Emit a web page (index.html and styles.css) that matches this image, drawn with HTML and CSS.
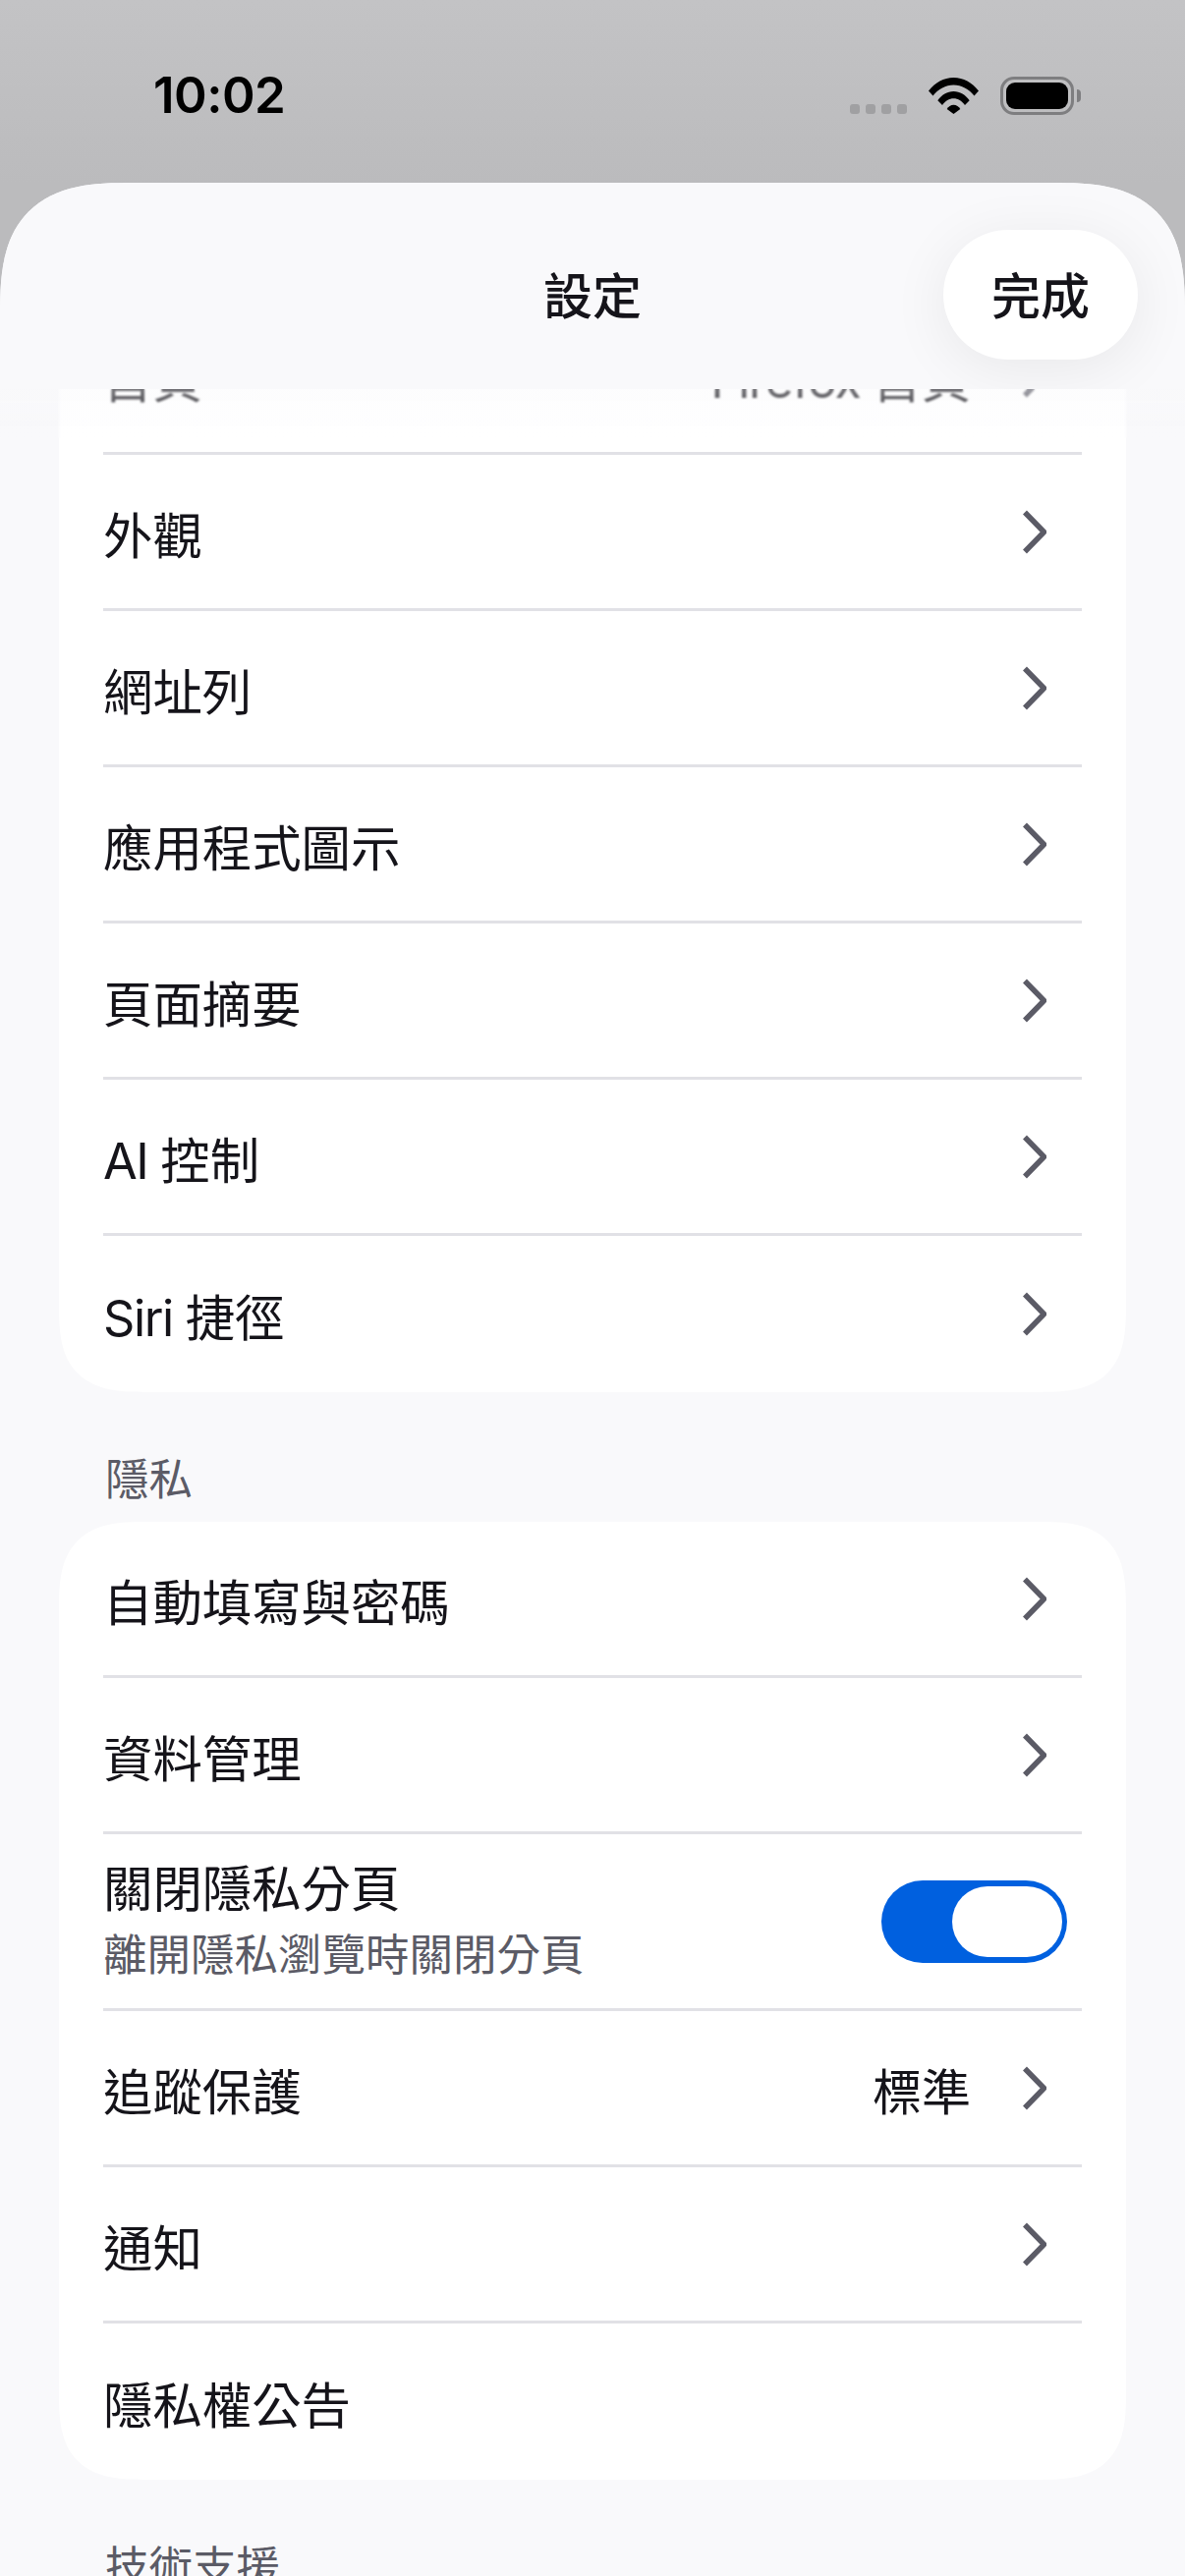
FILE: index.html
```html
<!DOCTYPE html>
<html lang="zh-Hant">
<head>
<meta charset="utf-8">
<title>設定</title>
<link rel="stylesheet" href="styles.css">
</head>
<body>
<div class="screen">
  <div class="status">
    <span class="time">10:02</span>
    <div class="status-icons">
      <div class="signal"><i></i><i></i><i></i><i></i></div>
      <svg class="wifi" viewBox="0 0 51 37"><path d="M0 13.5C6.800 5 15.500 0 25.500 0S44.200 5 51 13.500L46.500 18.500C40.800 11.500 33.800 7.500 25.500 7.500S10.200 11.500 4.500 18.500Z"/><path d="M9.300 23.300C13.300 17.500 19 14 25.500 14S37.700 17.500 41.700 23.300L37 28C34 23.800 30 21.300 25.500 21.300S17 23.800 14 28Z"/><path d="M18.700 32C20.200 29.500 22.600 27.800 25.500 27.800S30.800 29.500 32.300 32L25.500 37Z"/></svg>
      <div class="battery"><div class="battery-body"><div class="battery-fill"></div></div><div class="battery-nub"></div></div>
    </div>
  </div>
  <main class="sheet">
    <header class="nav">
      <span></span>
      <h1 class="nav-title">設定</h1>
      <button class="done">完成</button>
    </header>
    <div class="nav-fade"></div>
    <div class="scroll">
      <section class="card">
        <div class="row"><span class="label">首頁</span><span class="value"><span class="latin">Firefox </span>首頁</span><svg class="chev" viewBox="0 0 25 45"><path d="M3 2.500L22.500 22.500L3 42.500"/></svg></div>
        <div class="row"><span class="label">外觀</span><svg class="chev" viewBox="0 0 25 45"><path d="M3 2.500L22.500 22.500L3 42.500"/></svg></div>
        <div class="row"><span class="label">網址列</span><svg class="chev" viewBox="0 0 25 45"><path d="M3 2.500L22.500 22.500L3 42.500"/></svg></div>
        <div class="row"><span class="label">應用程式圖示</span><svg class="chev" viewBox="0 0 25 45"><path d="M3 2.500L22.500 22.500L3 42.500"/></svg></div>
        <div class="row"><span class="label">頁面摘要</span><svg class="chev" viewBox="0 0 25 45"><path d="M3 2.500L22.500 22.500L3 42.500"/></svg></div>
        <div class="row"><span class="label"><span class="latin">AI </span>控制</span><svg class="chev" viewBox="0 0 25 45"><path d="M3 2.500L22.500 22.500L3 42.500"/></svg></div>
        <div class="row"><span class="label"><span class="latin">Siri </span>捷徑</span><svg class="chev" viewBox="0 0 25 45"><path d="M3 2.500L22.500 22.500L3 42.500"/></svg></div>
      </section>
      <h2 class="section-title">隱私</h2>
      <section class="card">
        <div class="row"><span class="label">自動填寫與密碼</span><svg class="chev" viewBox="0 0 25 45"><path d="M3 2.500L22.500 22.500L3 42.500"/></svg></div>
        <div class="row"><span class="label">資料管理</span><svg class="chev" viewBox="0 0 25 45"><path d="M3 2.500L22.500 22.500L3 42.500"/></svg></div>
        <div class="row row-tall">
          <div class="stack"><span class="label">關閉隱私分頁</span><span class="sub">離開隱私瀏覽時關閉分頁</span></div>
          <div class="toggle"><div class="knob"></div></div>
        </div>
        <div class="row"><span class="label">追蹤保護</span><span class="value">標準</span><svg class="chev" viewBox="0 0 25 45"><path d="M3 2.500L22.500 22.500L3 42.500"/></svg></div>
        <div class="row"><span class="label">通知</span><svg class="chev" viewBox="0 0 25 45"><path d="M3 2.500L22.500 22.500L3 42.500"/></svg></div>
        <div class="row"><span class="label">隱私權公告</span></div>
      </section>
      <h2 class="section-title">技術支援</h2>
    </div>
  </main>
</div>
</body>
</html>
```

FILE: styles.css
```css
* { box-sizing: border-box; }
html, body { margin: 0; padding: 0; height: 2622px; overflow: hidden; }
body {
  font-family: Inter, "Noto Sans CJK TC", sans-serif;
  color: #15141a;
}
.screen {
  width: 1206px;
  height: 2622px;
  display: flex;
  flex-direction: column;
  overflow: hidden;
  background: linear-gradient(#c3c3c5, #bbbbbd 186px, #bbbbbd 400px);
}
.status {
  height: 186px;
  flex: none;
  display: flex;
  justify-content: space-between;
  align-items: flex-start;
  padding: 66px 106px 0 156px;
}
.time { font-size: 51px; line-height: 62px; font-weight: 600; color: #000; letter-spacing: -0.5px; }
.status-icons { display: flex; align-items: flex-start; margin-top: 12px; }
.signal { display: flex; gap: 6px; margin-top: 28px; }
.signal i { display: block; width: 10px; height: 10px; border-radius: 3px; background: #a0a0a2; }
.wifi { width: 51px; height: 37px; margin: 1px 0 0 22px; fill: #000; }
.battery { display: flex; align-items: center; margin-left: 22px; }
.battery-body { width: 75px; height: 39px; padding: 3px; border: 3px solid #7e7e80; border-radius: 14px; }
.battery-fill { width: 100%; height: 100%; background: #000; border-radius: 9px; }
.battery-nub { width: 4px; height: 13px; margin-left: 3px; background: #7e7e80; border-radius: 0 4px 4px 0; }

.sheet {
  position: relative;
  flex: 1;
  overflow: hidden;
  background: #f9f9fb;
  border-radius: 135px 135px 0 0;
  corner-shape: superellipse(1.5);
}
.nav {
  position: absolute;
  top: 0;
  left: 0;
  right: 0;
  height: 210px;
  z-index: 2;
  padding: 48px 48px 30px;
  display: grid;
  grid-template-columns: 1fr auto 1fr;
  align-items: center;
  overflow: hidden;
  background: #f9f9fb;
}
.nav-title { margin: 0; padding-top: 3px; font-size: 50px; line-height: 60px; font-weight: 500; }
.done {
  justify-self: end;
  width: 198px;
  height: 132px;
  padding: 3px 0 0;
  border: 0;
  border-radius: 66px;
  background: #fff;
  font: 500 50px/60px Inter, "Noto Sans CJK TC", sans-serif;
  color: #15141a;
  box-shadow: 0 10px 60px rgba(0, 0, 0, 0.07);
}
.nav-fade {
  position: absolute;
  top: 210px;
  left: 0;
  right: 0;
  height: 50px;
  z-index: 1;
  background: linear-gradient(rgba(249, 249, 251, 0.4), rgba(249, 249, 251, 0));
  backdrop-filter: blur(1px);
}
.scroll { padding: 118px 60px 0; }
.card { background: #fff; border-radius: 88px; corner-shape: superellipse(1.5); }
.row {
  height: 159px;
  margin: 0 45px;
  display: flex;
  align-items: center;
  border-bottom: 3px solid #e1e1e6;
}
.row:last-child { border-bottom: 0; }
.row-tall { height: 180px; }
.label { padding-top: 9px; font-size: 50.4px; line-height: 60px; white-space: nowrap; }
.latin { letter-spacing: -1.4px; }
.value { margin-left: auto; padding-top: 9px; font-size: 50px; line-height: 60px; }
.value + .chev { margin-left: 52px; }
.chev {
  width: 25px;
  height: 45px;
  margin-left: auto;
  margin-right: 36px;
  flex: none;
  fill: none;
  stroke: #5b5b66;
  stroke-width: 5.5;
  stroke-linejoin: round;
}
.stack { display: flex; flex-direction: column; padding-bottom: 2px; }
.stack .label { padding-top: 0; }
.sub { margin-top: 11px; font-size: 44.5px; line-height: 52px; color: #5b5b66; }
.toggle {
  width: 189px;
  height: 84px;
  margin-left: auto;
  margin-right: 15px;
  padding: 6px 5px 6px 72px;
  border-radius: 42px;
  background: #0060df;
}
.knob { width: 112px; height: 72px; border-radius: 36px; background: #fff; }
.section-title {
  margin: 0;
  padding: 59px 0 0 47px;
  height: 132px;
  font-size: 44.5px;
  line-height: 60px;
  font-weight: 400;
  color: #5b5b66;
}
```
